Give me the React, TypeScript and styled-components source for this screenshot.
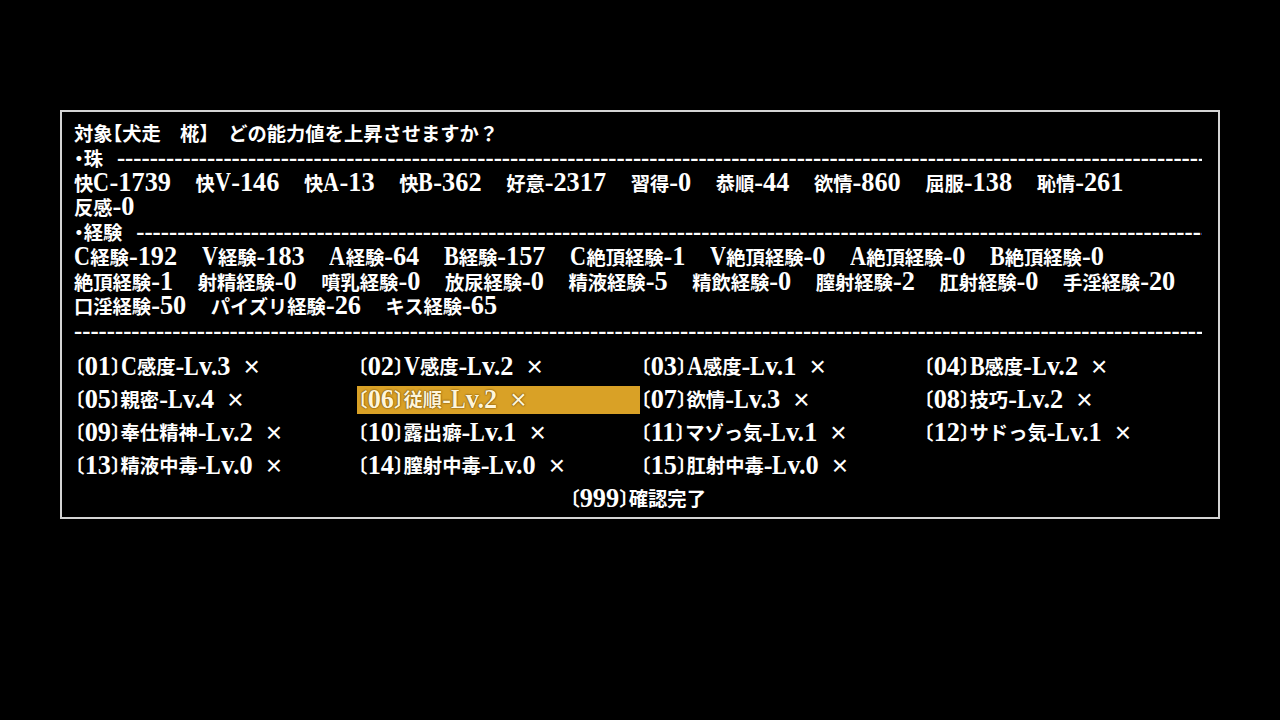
import React from "react";
import styled, { createGlobalStyle } from "styled-components";

const GlobalStyle = createGlobalStyle`
  html, body { margin: 0; padding: 0; background: #000; }
  body { font-family: "Noto Sans CJK JP", sans-serif; }
`;

const Page = styled.div`
  width: 1280px;
  height: 720px;
  background: #000;
  box-sizing: border-box;
  padding: 110px 0 0 60px;
`;

const Frame = styled.section`
  width: 1160px;
  height: 409px;
  box-sizing: border-box;
  border: 2px solid #d4d4d4;
  padding: 9px 16px 0 12px;
  color: #fff;
  font-family: "Noto Sans CJK JP", sans-serif;
  font-weight: 700;
  font-size: 19.3px;
  line-height: 24.75px;
  display: flex;
  flex-direction: column;
`;

const Line = styled.div`
  height: 24.75px;
  display: flex;
  align-items: center;
  gap: 24.6px;
  white-space: nowrap;
`;

const Item = styled.span`
  display: inline-block;
`;

const Lat = styled.span`
  font-family: "Liberation Serif", serif;
  font-weight: 700;
  font-size: 26.3px;
  line-height: 20px;
`;

const Cap = styled.span`
  display: inline-block;
  transform: scaleX(0.84);
  transform-origin: 0 50%;
  margin-right: -2.7px;
`;

const Pn = styled.span`
  font-feature-settings: "halt";
`;

const Rule = styled.span<{ $indent?: number }>`
  flex: 1;
  min-width: 0;
  overflow: hidden;
  margin-left: ${(p) => (p.$indent ?? 0) - 24.6}px;
  font-family: "Liberation Serif", serif;
  font-weight: 700;
  font-size: 24.6px;
  line-height: 20px;
`;

const Options = styled.div`
  display: grid;
  grid-template-columns: repeat(4, 283px);
  row-gap: 5px;
  margin-top: 9px;
`;

const Cell = styled.div<{ $active?: boolean }>`
  height: 28px;
  display: flex;
  align-items: center;
  padding-left: 1px;
  white-space: nowrap;
  background: ${(p) => (p.$active ? "#d9a126" : "transparent")};
  color: ${(p) => (p.$active ? "#fff5d8" : "#fff")};
  text-shadow: ${(p) => (p.$active ? "0 0 2px #6b4300, 0 0 1px #6b4300" : "none")};
`;

const Confirm = styled.div`
  height: 28px;
  margin-top: 5px;
  display: flex;
  align-items: center;
  justify-content: center;
  white-space: nowrap;
`;

const Cross = styled.span`
  font-family: "Liberation Sans", sans-serif;
  font-weight: 400;
  font-size: 28px;
  line-height: 20px;
  margin-left: 13px;
`;

const latin = (t: string, key: number) => (
  <Lat key={key}>
    {t.split(/([A-Z])/).filter(Boolean).map((p, j) =>
      /^[A-Z]$/.test(p) ? <Cap key={j}>{p}</Cap> : <React.Fragment key={j}>{p}</React.Fragment>
    )}
  </Lat>
);

const rich = (s: string) =>
  s
    .split(/([\x21-\x7e]+|[〔〕【】・])/)
    .filter(Boolean)
    .map((t, i) =>
      /^[\x21-\x7e]+$/.test(t) ? (
        latin(t, i)
      ) : /^[〔〕【】・]$/.test(t) ? (
        <Pn key={i}>{t}</Pn>
      ) : (
        <React.Fragment key={i}>{t}</React.Fragment>
      )
    );

const dashes = "-".repeat(180);

const statLines: string[][] = [
  ["快C-1739", "快V-146", "快A-13", "快B-362", "好意-2317", "習得-0", "恭順-44", "欲情-860", "屈服-138", "恥情-261"],
  ["反感-0"],
];

const expLines: string[][] = [
  ["C経験-192", "V経験-183", "A経験-64", "B経験-157", "C絶頂経験-1", "V絶頂経験-0", "A絶頂経験-0", "B絶頂経験-0"],
  ["絶頂経験-1", "射精経験-0", "噴乳経験-0", "放尿経験-0", "精液経験-5", "精飲経験-0", "膣射経験-2", "肛射経験-0", "手淫経験-20"],
  ["口淫経験-50", "パイズリ経験-26", "キス経験-65"],
];

const options = [
  "〔01〕C感度-Lv.3",
  "〔02〕V感度-Lv.2",
  "〔03〕A感度-Lv.1",
  "〔04〕B感度-Lv.2",
  "〔05〕親密-Lv.4",
  "〔06〕従順-Lv.2",
  "〔07〕欲情-Lv.3",
  "〔08〕技巧-Lv.2",
  "〔09〕奉仕精神-Lv.2",
  "〔10〕露出癖-Lv.1",
  "〔11〕マゾっ気-Lv.1",
  "〔12〕サドっ気-Lv.1",
  "〔13〕精液中毒-Lv.0",
  "〔14〕膣射中毒-Lv.0",
  "〔15〕肛射中毒-Lv.0",
];

const StatBlock = ({ lines }: { lines: string[][] }) => (
  <>
    {lines.map((items, li) => (
      <Line key={li}>
        {items.map((it, ii) => (
          <Item key={ii}>{rich(it)}</Item>
        ))}
      </Line>
    ))}
  </>
);

export default function App() {
  return (
    <Page>
      <GlobalStyle />
      <Frame>
        <Line>
          <Item>{rich("対象【犬走　椛】　どの能力値を上昇させますか？")}</Item>
        </Line>
        <Line>
          <Item>{rich("・珠")}</Item>
          <Rule $indent={14}>{dashes}</Rule>
        </Line>
        <StatBlock lines={statLines} />
        <Line>
          <Item>{rich("・経験")}</Item>
          <Rule $indent={14}>{dashes}</Rule>
        </Line>
        <StatBlock lines={expLines} />
        <Line>
          <Rule $indent={24.6}>{dashes}</Rule>
        </Line>
        <Options>
          {options.map((o, i) => (
            <Cell key={i} $active={i === 5}>
              {rich(o)}
              <Cross>×</Cross>
            </Cell>
          ))}
        </Options>
        <Confirm>{rich("〔999〕確認完了")}</Confirm>
      </Frame>
    </Page>
  );
}
